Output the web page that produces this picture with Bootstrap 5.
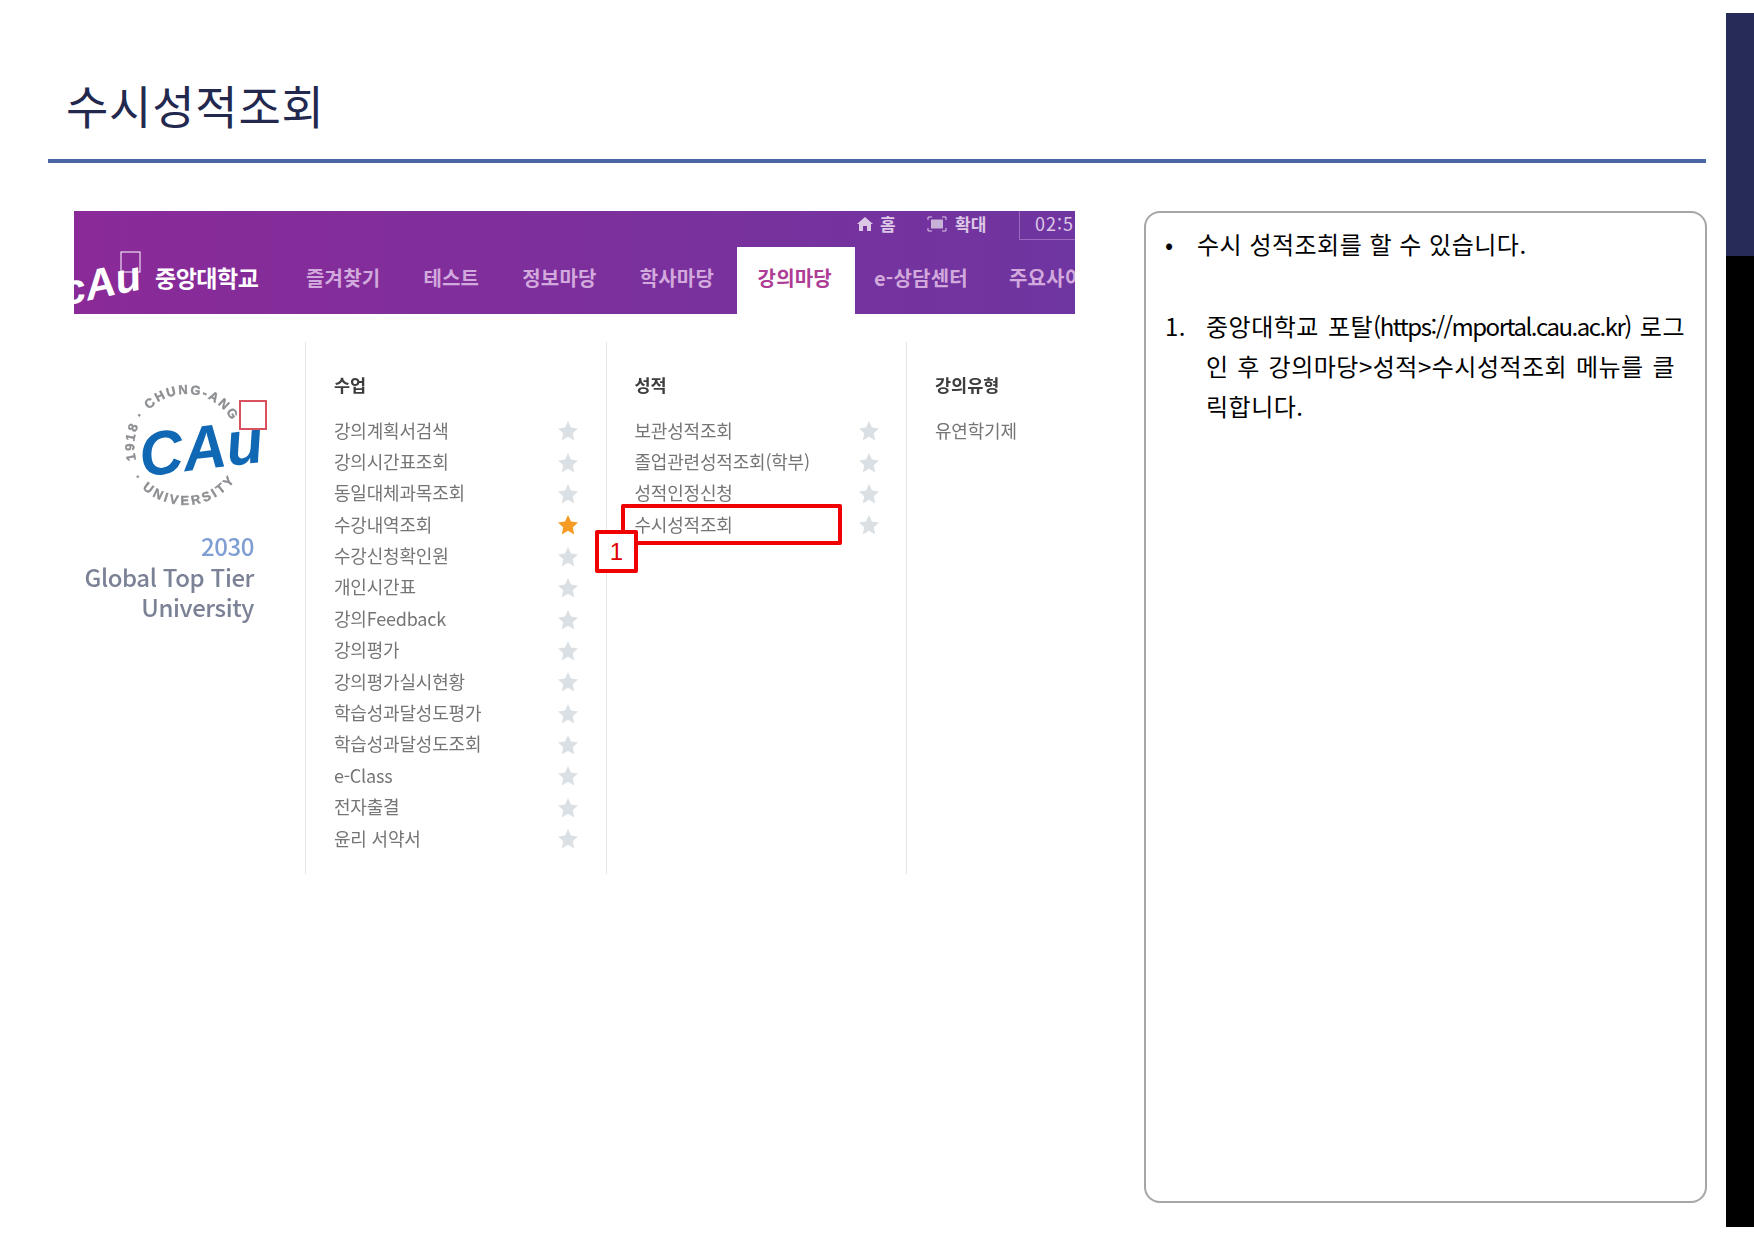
<!DOCTYPE html>
<html lang="ko">
<head>
    <meta charset="UTF-8">
    <meta name="viewport" content="width=device-width, initial-scale=1.0">
    <title>수시성적조회</title>
    <link href="https://cdn.jsdelivr.net/npm/bootstrap@5.3.0/dist/css/bootstrap.min.css" rel="stylesheet">
    <style>
        html, body {
            height: 100%;
        }
        body {
            background: #fff;
            font-family: "Noto Sans CJK KR", "Liberation Sans", sans-serif;
            overflow: hidden;
        }
        .slide {
            width: 1754px;
            height: 1240px;
        }
        .slide-main {
            width: 1726px;
            padding: 0 20px 0 48px;
        }
        .side-strip {
            width: 28px;
            padding-top: 13px;
            height: 1227px;
        }
        .strip-navy { height: 243px; background: #262b57; }
        .strip-black { background: #000; }
        .slide-title {
            font-size: 46px;
            font-weight: 400;
            line-height: 58px;
            letter-spacing: .8px;
            color: #23284f;
            margin: 0;
            padding: 75px 0 0 18px;
            height: 159px;
        }
        .title-rule {
            height: 4px;
            background: #4a66a5;
        }
        .content-row {
            padding-top: 48px;
        }
        /* captured portal screen */
        .shot {
            width: 1027px;
            padding-left: 26px;
            position: relative;
        }
        .portal {
            width: 1001px;
            filter: blur(.5px);
        }
        .portal-head {
            height: 103px;
            background: linear-gradient(90deg, #8a2a98 0%, #6f35a0 100%);
            overflow: hidden;
        }
        .head-top {
            height: 36px;
            color: #dcc8e6;
            font-size: 17px;
            font-weight: 700;
        }
        .head-top span {
            display: inline-flex;
            align-items: center;
            height: 29px;
            padding-bottom: 4px;
        }
        .top-home { width: 70px; gap: 7px; }
        .top-zoom { width: 92px; gap: 8px; }
        .head-top .top-time {
            width: 56px;
            border-left: 1px solid #9a68bd;
            border-bottom: 1px solid #9a68bd;
            padding-left: 15px;
            font-weight: 400;
            font-size: 18px;
            letter-spacing: 1px;
            white-space: nowrap;
            overflow: hidden;
        }
        .head-menu {
            height: 67px;
            white-space: nowrap;
        }
        .brand-mark { width: 81px; flex: none; }
        .brand-name {
            width: 151px;
            flex: none;
            color: #fff;
            font-size: 23px;
            font-weight: 700;
            padding-top: 13px;
            letter-spacing: -.5px;
        }
        .menu-item {
            flex: none;
            color: #d2a9dc;
            font-size: 20px;
            font-weight: 700;
            padding: 16px 21.5px 0;
            letter-spacing: .2px;
        }
        .menu-item:last-child { margin-left: -2px; }
        .menu-item.now {
            background: #fff;
            color: #ae3d95;
            width: 118px;
            padding-left: 21px;
            padding-right: 0;
            margin-left: 1px;
            margin-right: -2px;
        }
        .portal-body {
            padding-top: 28px;
            height: 622px;
        }
        .logo-col {
            width: 231px;
            flex: none;
            padding-top: 26px;
        }
        .logo-wrap {
            padding-left: 49px;
            height: 163px;
        }
        .vision {
            width: 180px;
            text-align: right;
            font-size: 24px;
            line-height: 30.5px;
            font-weight: 500;
            color: #7b8296;
            letter-spacing: -.4px;
        }
        .vision b { font-weight: 500; color: #7f9ed4; display: block; }
        .menu-col {
            width: 300.5px;
            flex: none;
            height: 532px;
            border-left: 1px solid #e4e4e4;
            padding: 30px 0 0 28px;
            color: #757575;
        }
        .menu-col h6 {
            font-size: 17.5px;
            font-weight: 700;
            color: #3d3d3d;
            margin: 0 0 17.5px;
            line-height: 25px;
        }
        .menu-row {
            height: 31.4px;
            width: 244px;
            font-size: 18px;
            line-height: 31.4px;
            letter-spacing: -.2px;
        }
        .menu-row svg { margin-top: 2px; }
        .star-gray { fill: #dbe0e4; }
        .star-on { fill: #f59a23; }
        .mark-row {
            position: absolute;
            left: 573px;
            top: 293px;
            width: 221px;
            height: 41px;
            border: 4px solid #f00000;
            border-radius: 2px;
        }
        .mark-num {
            position: absolute;
            left: 547px;
            top: 319px;
            width: 43px;
            height: 43px;
            border: 4px solid #f00000;
            border-radius: 2px;
            background: #fff;
            color: #e00000;
            font: 400 24px/35px "Liberation Sans", sans-serif;
            text-align: center;
        }
        /* right note box */
        .note-box {
            width: 563px;
            height: 992px;
            margin-left: 69px;
            border: 2px solid #a6a6a6;
            border-radius: 16px;
            color: #000;
            font-size: 24px;
            line-height: 40px;
            letter-spacing: .5px;
            padding-top: 11px;
        }
        .note-line { padding-left: 19px; }
        .note-bullet { width: 32px; flex: none; }
        .note-num { width: 41px; flex: none; }
        .note-gap { height: 42px; }
        .note-text { width: 479px; white-space: nowrap; }
        .note-fill {
            display: block;
            text-align: justify;
            text-align-last: justify;
            white-space: normal;
        }
        .note-wide { word-spacing: 1.5px; }
        .note-url { letter-spacing: -1.5px; }
    </style>
</head>
<body>
    <div class="slide d-flex">
        <div class="slide-main flex-shrink-0">
            <h1 class="slide-title">수시성적조회</h1>
            <div class="title-rule"></div>

            <div class="content-row d-flex align-items-start">
                <div class="shot flex-shrink-0">
                    <div class="portal">
                        <div class="portal-head">
                            <div class="head-top d-flex justify-content-end">
                                <span class="top-home">
                                    <svg width="16" height="14" viewBox="0 0 16 14"><path fill="#dcc8e6" d="M8 0 16 7h-2v7h-4V9H6v5H2V7H0z"/></svg>홈
                                </span>
                                <span class="top-zoom">
                                    <svg width="20" height="16" viewBox="0 0 20 16"><path fill="none" stroke="#dcc8e6" d="M1 4V1h4M15 1h4v3M19 12v3h-4M5 15H1v-3"/><rect x="4" y="3.500" width="12" height="9" fill="#c9b2d8"/></svg>확대
                                </span>
                                <span class="top-time">02:5</span>
                            </div>
                            <div class="head-menu d-flex">
                                <div class="brand-mark">
                                    <svg width="81" height="67" viewBox="0 0 81 67">
                                        <text x="-12" y="50" font-family="Liberation Sans" font-size="42" font-weight="700" font-style="italic" fill="#fff" transform="rotate(-12 30 40)" textLength="80" lengthAdjust="spacingAndGlyphs">cAu</text>
                                        <rect x="47" y="5" width="19" height="20" fill="none" stroke="#fff"/>
                                    </svg>
                                </div>
                                <div class="brand-name">중앙대학교</div>
                                <div class="menu-item ps-0">즐겨찾기</div>
                                <div class="menu-item">테스트</div>
                                <div class="menu-item">정보마당</div>
                                <div class="menu-item">학사마당</div>
                                <div class="menu-item now">강의마당</div>
                                <div class="menu-item">e-상담센터</div>
                                <div class="menu-item">주요사이트</div>
                            </div>
                        </div>

                        <div class="portal-body d-flex">
                            <div class="logo-col">
                                <div class="logo-wrap">
                                    <svg width="150" height="145" viewBox="0 0 150 145">
                                        <defs>
                                            <path id="ringTop" d="M13.100 91.800A52 52 0 0 1 112.200 60.500"/>
                                            <path id="ringBottom" d="M10.400 110.100A63 63 0 0 0 116.600 105.500"/>
                                        </defs>
                                        <text font-family="Liberation Sans" font-size="13" font-weight="700" fill="#8d8f92" stroke="#8d8f92" stroke-width=".4" letter-spacing="1.9"><textPath href="#ringTop">1918 · CHUNG-ANG</textPath></text>
                                        <text font-family="Liberation Sans" font-size="13" font-weight="700" fill="#8d8f92" stroke="#8d8f92" stroke-width=".4" letter-spacing="2.8"><textPath href="#ringBottom">· UNIVERSITY</textPath></text>
                                        <text x="16" y="101" font-family="Liberation Sans" font-size="62" font-weight="700" font-style="italic" fill="#1068b4" transform="rotate(-7 80 80)" textLength="124" lengthAdjust="spacingAndGlyphs">CAu</text>
                                        <rect x="117" y="33" width="26" height="28" fill="none" stroke="#d9505f" stroke-width="2"/>
                                    </svg>
                                </div>
                                <div class="vision"><b>2030</b>Global Top Tier University</div>
                            </div>

                            <div class="menu-col">
                                <h6>수업</h6>
                                <div id="colClass"></div>
                            </div>
                            <div class="menu-col">
                                <h6>성적</h6>
                                <div id="colGrade"></div>
                            </div>
                            <div class="menu-col">
                                <h6>강의유형</h6>
                                <div class="menu-row">유연학기제</div>
                            </div>
                        </div>
                    </div>
                    <div class="mark-row"></div>
                    <div class="mark-num">1</div>
                </div>

                <div class="note-box flex-shrink-0">
                    <div class="note-line d-flex">
                        <span class="note-bullet">•</span>
                        <span>수시 성적조회를 할 수 있습니다.</span>
                    </div>
                    <div class="note-gap"></div>
                    <div class="note-line d-flex">
                        <span class="note-num">1.</span>
                        <div class="note-text">
                            <span class="note-fill">중앙대학교 포탈<span class="note-url">(https://mportal.cau.ac.kr)</span> 로그</span>
                            <span class="d-block note-wide">인 후 강의마당&gt;성적&gt;수시성적조회 메뉴를 클</span>
                            <span class="d-block">릭합니다.</span>
                        </div>
                    </div>
                </div>
            </div>
        </div>
        <div class="side-strip flex-shrink-0 d-flex flex-column">
            <div class="strip-navy"></div>
            <div class="strip-black flex-grow-1"></div>
        </div>
    </div>

    <script>
        // Menu data
        const classMenu = ['강의계획서검색', '강의시간표조회', '동일대체과목조회', '수강내역조회', '수강신청확인원', '개인시간표', '강의Feedback', '강의평가', '강의평가실시현황', '학습성과달성도평가', '학습성과달성도조회', 'e-Class', '전자출결', '윤리 서약서'];
        const gradeMenu = ['보관성적조회', '졸업관련성적조회(학부)', '성적인정신청', '수시성적조회'];

        // Render one menu list with its stars
        function renderMenu(targetId, items, activeItem) {
            const target = document.getElementById(targetId);
            items.forEach(item => {
                const row = document.createElement('div');
                row.className = 'menu-row d-flex justify-content-between align-items-center';
                const starClass = item === activeItem ? 'star-on' : 'star-gray';
                row.innerHTML = `<span>${item}</span><svg width="20" height="20" viewBox="0 0 20 20"><path class="${starClass}" d="M10 0l3 6.600 7 .8-5.200 4.800 1.400 7.200L10 15.800 3.800 19.400l1.400-7.200L0 7.400l7-.8z"/></svg>`;
                target.appendChild(row);
            });
        }

        renderMenu('colClass', classMenu, '수강내역조회');
        renderMenu('colGrade', gradeMenu, null);
    </script>
</body>
</html>
